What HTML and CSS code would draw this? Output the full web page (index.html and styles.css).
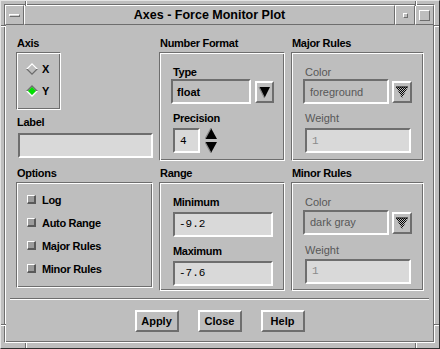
FILE: index.html
```html
<!DOCTYPE html>
<html lang="en">
<head>
    <meta charset="UTF-8">
    <title>Axes - Force Monitor Plot</title>
    <link rel="stylesheet" href="styles.css">
</head>
<body>
    <svg class="defs" width="0" height="0">
        <defs>
            <pattern id="stipple" width="2" height="2" patternUnits="userSpaceOnUse">
                <rect width="2" height="2" fill="#bebebe"/>
                <rect width="1" height="1" fill="#000"/>
                <rect x="1" y="1" width="1" height="1" fill="#000"/>
            </pattern>
        </defs>
    </svg>

    <div class="window">
        <!-- resize corner notches on the frame -->
        <span class="notch notch-v" style="left:24px;top:0"></span>
        <span class="notch notch-v" style="left:414px;top:0"></span>
        <span class="notch notch-v" style="left:24px;bottom:0"></span>
        <span class="notch notch-v" style="left:414px;bottom:0"></span>
        <span class="notch notch-h" style="top:24px;left:0"></span>
        <span class="notch notch-h" style="top:24px;right:0"></span>
        <span class="notch notch-h" style="top:323px;left:0"></span>
        <span class="notch notch-h" style="top:323px;right:0"></span>

        <div class="frame">
            <div class="titlebar">
                <div class="tb-cell tb-menu"><span class="menu-bar"></span></div>
                <div class="tb-cell tb-title">Axes - Force Monitor Plot</div>
                <div class="tb-cell tb-min"><span class="min-box"></span></div>
                <div class="tb-cell tb-max"><span class="max-box"></span></div>
            </div>

            <div class="client">
                <div class="panels">
                    <!-- Axis -->
                    <div class="group">
                        <div class="group-title">Axis</div>
                        <div class="etched radio-box">
                            <div class="radio-row">
                                <svg class="diamond" viewBox="0 0 12 12">
                                    <polygon points="0,6 6,0 12,6 10,6 6,2 2,6" fill="#fff"/>
                                    <polygon points="0,6 6,12 12,6 10,6 6,10 2,6" fill="#6e6e6e"/>
                                    <polygon points="2,6 6,2 10,6 6,10" fill="#bebebe"/>
                                </svg>
                                <span>X</span>
                            </div>
                            <div class="radio-row">
                                <svg class="diamond" viewBox="0 0 12 12">
                                    <polygon points="0,6 6,0 12,6 10,6 6,2 2,6" fill="#6e6e6e"/>
                                    <polygon points="0,6 6,12 12,6 10,6 6,10 2,6" fill="#fff"/>
                                    <polygon points="2,6 6,2 10,6 6,10" fill="#00e000"/>
                                </svg>
                                <span>Y</span>
                            </div>
                        </div>
                        <div class="group-title label-title">Label</div>
                        <div class="field label-field"></div>
                    </div>

                    <!-- Number Format -->
                    <div class="group">
                        <div class="group-title">Number Format</div>
                        <div class="etched box-top">
                            <div class="field-label">Type</div>
                            <div class="option-row">
                                <div class="field option-field type-field bold">float</div>
                                <div class="arrow-btn">
                                    <svg width="15" height="18" viewBox="0 0 15 18">
                                        <polygon points="2,4 13,4 7.5,15" fill="#000"/>
                                        <polyline points="2,4 7.5,15" stroke="#8a8a8a" stroke-width="1.2" fill="none"/>
                                    </svg>
                                </div>
                            </div>
                            <div class="field-label gap-label">Precision</div>
                            <div class="spin-row">
                                <div class="field spin-field mono">4</div>
                                <div class="spinner">
                                    <svg width="12" height="12" viewBox="0 0 12 12">
                                        <polygon points="6,0 12,11 0,11" fill="#000"/>
                                        <polyline points="6,0 0,11" stroke="#8a8a8a" stroke-width="1.2" fill="none"/>
                                    </svg>
                                    <svg width="12" height="12" viewBox="0 0 12 12">
                                        <polygon points="0,1 12,1 6,12" fill="#000"/>
                                        <polyline points="0,1 6,12" stroke="#8a8a8a" stroke-width="1.2" fill="none"/>
                                    </svg>
                                </div>
                            </div>
                        </div>
                    </div>

                    <!-- Major Rules -->
                    <div class="group">
                        <div class="group-title">Major Rules</div>
                        <div class="etched box-top">
                            <div class="field-label disabled">Color</div>
                            <div class="option-row">
                                <div class="field option-field rule-field disabled">foreground</div>
                                <div class="arrow-btn rule-btn">
                                    <svg width="16" height="18" viewBox="0 0 16 18">
                                        <polygon points="2,4 14,4 8,15" fill="url(#stipple)"/>
                                        <polyline points="2,4 14,4" stroke="#000" stroke-width="1" fill="none"/>
                                    </svg>
                                </div>
                            </div>
                            <div class="field-label gap-label disabled">Weight</div>
                            <div class="field weight-field mono disabled-value">1</div>
                        </div>
                    </div>

                    <!-- Options -->
                    <div class="group">
                        <div class="group-title">Options</div>
                        <div class="etched options-box">
                            <div class="check-row"><span class="check"></span>Log</div>
                            <div class="check-row"><span class="check"></span>Auto Range</div>
                            <div class="check-row"><span class="check"></span>Major Rules</div>
                            <div class="check-row"><span class="check"></span>Minor Rules</div>
                        </div>
                    </div>

                    <!-- Range -->
                    <div class="group">
                        <div class="group-title">Range</div>
                        <div class="etched box-bottom">
                            <div class="field-label">Minimum</div>
                            <div class="field range-field mono">-9.2</div>
                            <div class="field-label gap-label">Maximum</div>
                            <div class="field range-field mono">-7.6</div>
                        </div>
                    </div>

                    <!-- Minor Rules -->
                    <div class="group">
                        <div class="group-title">Minor Rules</div>
                        <div class="etched box-bottom minor-box">
                            <div class="field-label disabled">Color</div>
                            <div class="option-row">
                                <div class="field option-field rule-field disabled">dark gray</div>
                                <div class="arrow-btn rule-btn">
                                    <svg width="16" height="18" viewBox="0 0 16 18">
                                        <polygon points="2,4 14,4 8,15" fill="url(#stipple)"/>
                                        <polyline points="2,4 14,4" stroke="#000" stroke-width="1" fill="none"/>
                                    </svg>
                                </div>
                            </div>
                            <div class="field-label gap-label disabled">Weight</div>
                            <div class="field weight-field mono disabled-value">1</div>
                        </div>
                    </div>
                </div>

                <div class="separator"></div>

                <div class="buttons">
                    <button class="btn">Apply</button>
                    <button class="btn">Close</button>
                    <button class="btn">Help</button>
                </div>
            </div>
        </div>
    </div>
</body>
</html>
```

FILE: styles.css
```css
body {
    margin: 0;
    font-family: "Liberation Sans", Arial, sans-serif;
    font-size: 11px;
    color: #000;
    background: #bebebe;
}
.defs { position: absolute; }

.window {
    position: relative;
    width: 440px;
    height: 349px;
    box-sizing: border-box;
    background: #bebebe;
    border: 1px solid;
    border-color: #e4e4e4 #303030 #303030 #e4e4e4;
    padding: 3px 4px 5px 3px;
    display: flex;
}
.notch { position: absolute; }
.notch-v {
    width: 1px;
    height: 5px;
    background: #6e6e6e;
    border-right: 1px solid #fff;
}
.notch-h {
    width: 5px;
    height: 1px;
    background: #6e6e6e;
    border-bottom: 1px solid #fff;
}

.frame {
    flex: 1;
    display: flex;
    flex-direction: column;
    border: 1px solid;
    border-color: #6e6e6e #fff #fff #6e6e6e;
    box-shadow: inset 1px 1px 0 #fff, inset -1px -1px 0 #6e6e6e;
}

/* window title bar */
.titlebar {
    display: flex;
    height: 20px;
}
.tb-cell {
    box-sizing: border-box;
    height: 20px;
    border: 1px solid;
    border-color: #fff #6e6e6e #6e6e6e #fff;
    display: flex;
    align-items: center;
    justify-content: center;
}
.tb-menu { width: 19px; }
.tb-title {
    flex: 1;
    font-weight: bold;
    font-size: 12.5px;
}
.tb-min { width: 20px; }
.tb-max { width: 19px; }
.menu-bar {
    width: 11px;
    height: 3px;
    box-sizing: border-box;
    background: #d0d0d0;
    border: 1px solid;
    border-color: #fff #6e6e6e #6e6e6e #fff;
}
.min-box {
    width: 5px;
    height: 5px;
    box-sizing: border-box;
    border: 1px solid;
    border-color: #fff #6e6e6e #6e6e6e #fff;
}
.max-box {
    width: 11px;
    height: 11px;
    box-sizing: border-box;
    border: 1px solid;
    border-color: #fff #6e6e6e #6e6e6e #fff;
}

/* dialog body */
.client {
    flex: 1;
    padding: 12px 5px 0 5px;
}
.panels {
    display: grid;
    grid-template-columns: 137px 126px 133px;
    grid-template-rows: 125px 124px;
    column-gap: 6px;
    row-gap: 5px;
    padding-left: 6px;
}
.group {
    display: flex;
    flex-direction: column;
    align-items: flex-start;
}
.group-title {
    height: 15px;
    line-height: 13px;
    padding-left: 1px;
    font-weight: bold;
    letter-spacing: -0.3px;
}
.etched {
    box-sizing: border-box;
    border: 1px solid;
    border-color: #6e6e6e #fff #fff #6e6e6e;
    box-shadow: inset 1px 1px 0 #fff, inset -1px -1px 0 #6e6e6e;
}
.box-top {
    width: 100%;
    height: 109px;
    padding: 12px 0 0 13px;
}
.box-bottom {
    width: 100%;
    height: 110px;
    padding: 12px 0 0 13px;
}
.minor-box .option-row { margin-top: 1px; }
.minor-box .gap-label { margin-top: 8px; }
.minor-box .weight-field { margin-top: 2px; }

/* axis radio buttons */
.radio-box {
    width: 45px;
    height: 58px;
    padding: 5px 0 0 9px;
}
.radio-row {
    height: 22px;
    display: flex;
    align-items: center;
    gap: 4px;
    font-weight: bold;
}
.diamond { width: 12px; height: 12px; }
.label-title { margin-top: 6px; }
.label-field {
    margin: 2px 0 0 2px;
    width: 135px;
}

/* text fields */
.field {
    box-sizing: border-box;
    height: 25px;
    background: #d9d9d9;
    border: 2px solid;
    border-color: #6e6e6e #fff #fff #6e6e6e;
    display: flex;
    align-items: center;
    padding-left: 4px;
    white-space: nowrap;
}
.field-label {
    height: 14px;
    line-height: 14px;
    font-weight: bold;
    letter-spacing: -0.3px;
}
.gap-label { margin-top: 7px; }
.bold { font-weight: bold; }
.mono {
    font-family: "Liberation Mono", "Courier New", monospace;
    font-size: 11px;
}
.disabled {
    color: #585858;
    font-weight: normal;
    letter-spacing: 0;
}
.disabled-value { color: #8a8a8a; }

.option-row {
    display: flex;
    align-items: flex-start;
    margin-left: -2px;
}
.option-field { background: #bebebe; }
.type-field { width: 80px; padding-left: 4px; }
.rule-field { width: 86px; padding-left: 5px; }
.arrow-btn {
    box-sizing: border-box;
    width: 19px;
    height: 22px;
    margin: 2px 0 0 4px;
    border: 2px solid;
    border-color: #fff #6e6e6e #6e6e6e #fff;
    display: flex;
}
.rule-btn { width: 20px; margin-left: 3px; }

.spin-row {
    display: flex;
    align-items: center;
    margin-top: 3px;
    gap: 5px;
}
.spin-field { width: 27px; padding-left: 5px; }
.spinner {
    display: flex;
    flex-direction: column;
    gap: 1px;
}
.spinner svg { display: block; }

.weight-field {
    margin-top: 3px;
    width: 106px;
    padding-left: 5px;
}
.range-field {
    margin-top: 3px;
    width: 100px;
    padding-left: 4px;
}

/* options checkboxes */
.options-box {
    width: 100%;
    height: 106px;
    padding: 5px 0 0 10px;
}
.check-row {
    height: 23px;
    display: flex;
    align-items: center;
    gap: 6px;
    font-weight: bold;
    letter-spacing: -0.3px;
}
.check {
    box-sizing: border-box;
    width: 9px;
    height: 9px;
    background: #9c9c9c;
    border: 2px solid;
    border-color: #fff #5a5a5a #5a5a5a #fff;
    border-width: 1px 2px 2px 1px;
}

/* bottom */
.separator {
    margin-top: 7px;
    height: 1px;
    background: #6e6e6e;
    border-bottom: 1px solid #fff;
}
.buttons {
    display: flex;
    justify-content: center;
    gap: 19px;
    margin-top: 10px;
}
.btn {
    box-sizing: border-box;
    width: 44px;
    height: 22px;
    padding: 0;
    font-family: "Liberation Sans", Arial, sans-serif;
    font-size: 11px;
    font-weight: bold;
    color: #000;
    background: #bebebe;
    border: 2px solid;
    border-color: #fff #6e6e6e #6e6e6e #fff;
}
```
